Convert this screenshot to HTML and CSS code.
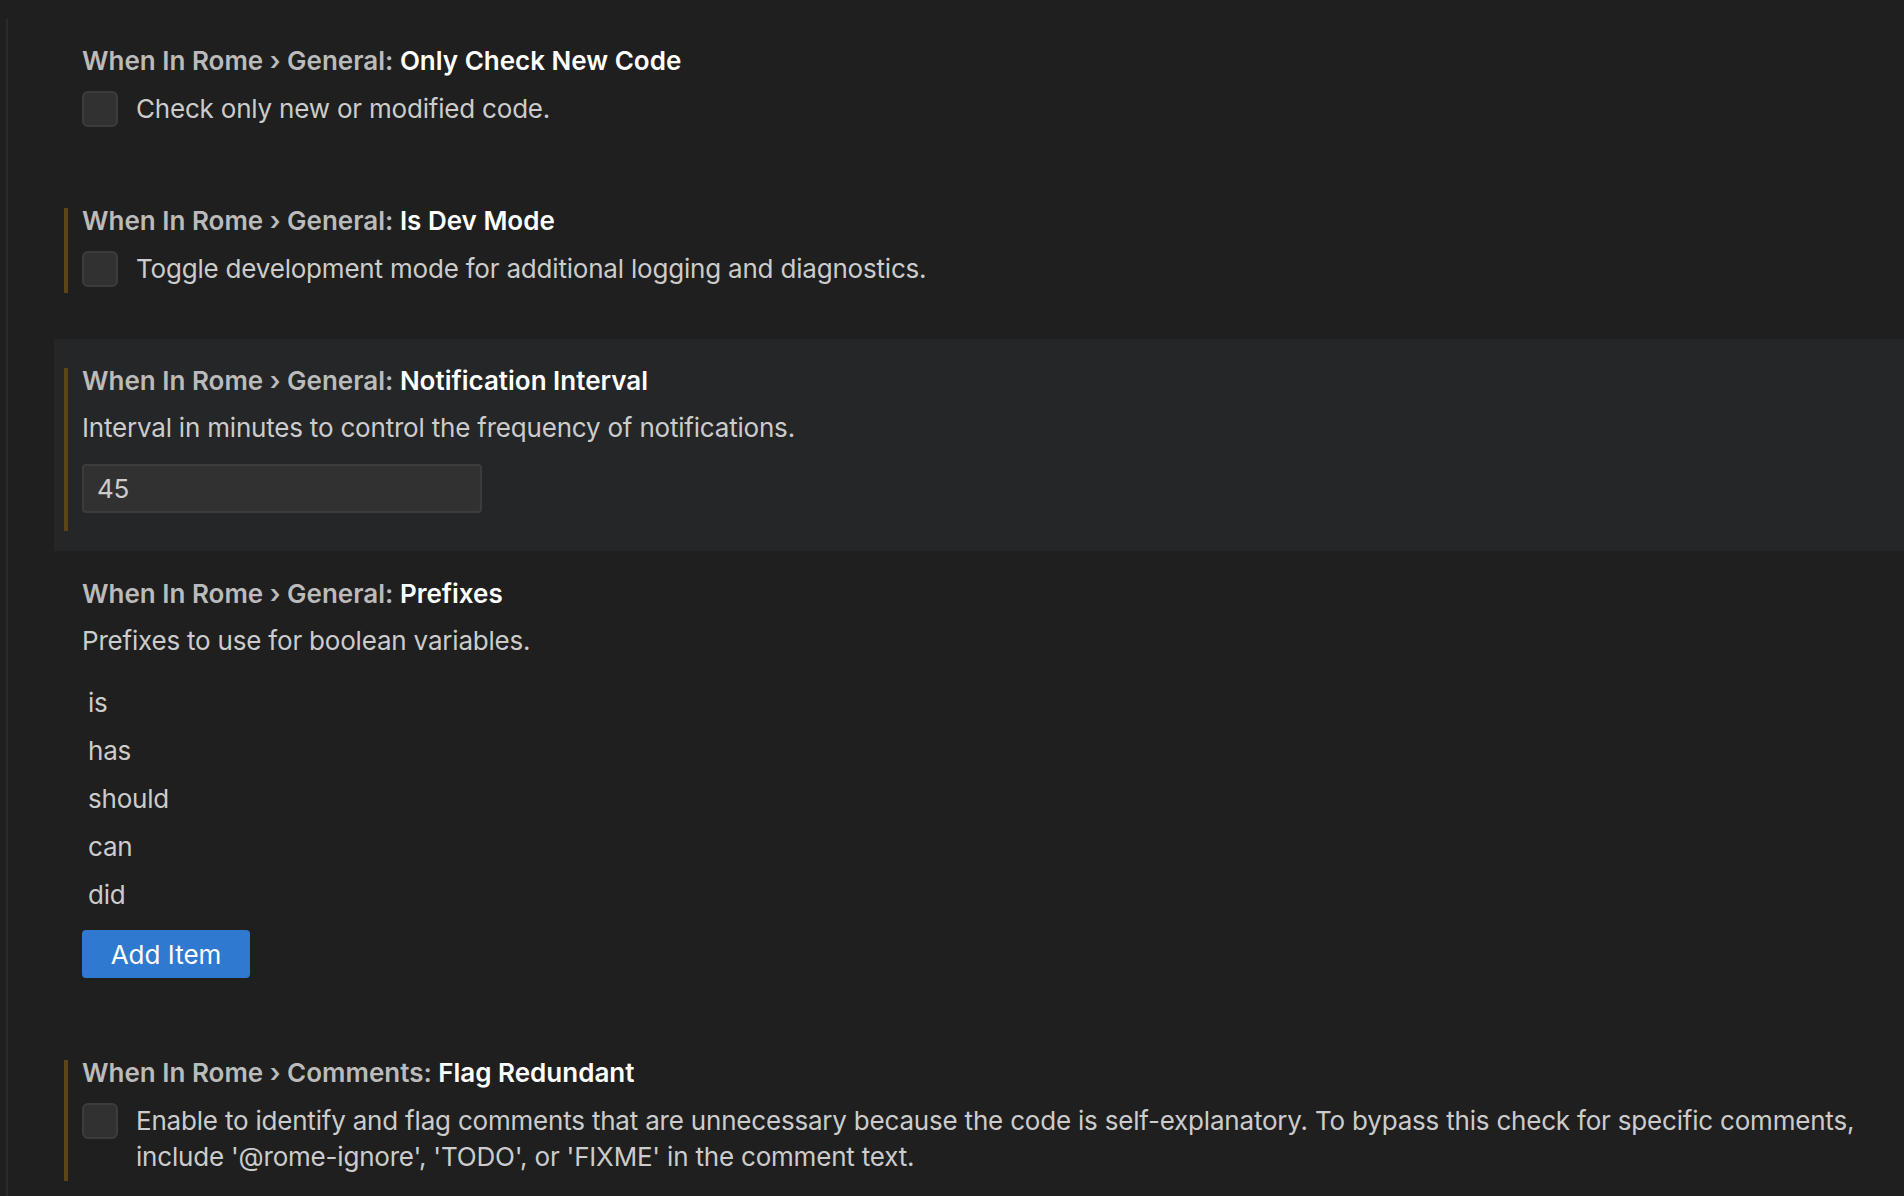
FILE: index.html
```html
<!DOCTYPE html>
<html lang="en">
<head>
<meta charset="utf-8">
<title>Settings</title>
<link rel="stylesheet" href="styles.css">
</head>
<body>
<div class="tree">
  <div class="item item-bool">
    <div class="contents">
      <div class="title"><span class="cat">When In Rome › General: </span><span class="label">Only Check New Code</span></div>
      <div class="bool-row"><span class="checkbox"></span><div class="desc">Check only new or modified code.</div></div>
    </div>
  </div>

  <div class="item item-bool">
    <div class="contents">
      <span class="modified"></span>
      <div class="title"><span class="cat">When In Rome › General: </span><span class="label">Is Dev Mode</span></div>
      <div class="bool-row"><span class="checkbox"></span><div class="desc">Toggle development mode for additional logging and diagnostics.</div></div>
    </div>
  </div>

  <div class="item item-number focused">
    <div class="contents">
      <span class="modified modified-input"></span>
      <div class="title"><span class="cat">When In Rome › General: </span><span class="label">Notification Interval</span></div>
      <div class="desc desc-block">Interval in minutes to control the frequency of notifications.</div>
      <div class="input">45</div>
    </div>
  </div>

  <div class="item item-array">
    <div class="contents">
      <div class="title"><span class="cat">When In Rome › General: </span><span class="label">Prefixes</span></div>
      <div class="desc desc-block">Prefixes to use for boolean variables.</div>
      <ul class="list">
        <li>is</li>
        <li>has</li>
        <li>should</li>
        <li>can</li>
        <li>did</li>
      </ul>
      <button class="add-btn" type="button">Add Item</button>
    </div>
  </div>

  <div class="item item-bool">
    <div class="contents">
      <span class="modified"></span>
      <div class="title"><span class="cat">When In Rome › Comments: </span><span class="label">Flag Redundant</span></div>
      <div class="bool-row"><span class="checkbox"></span><div class="desc">Enable to identify and flag comments that are unnecessary because the code is self-explanatory. To bypass this check for specific comments, include '@rome-ignore', 'TODO', or 'FIXME' in the comment text.</div></div>
    </div>
  </div>
</div>
</body>
</html>
```

FILE: styles.css
```css
html, body {
  margin: 0;
  padding: 0;
  background: #1f1f1f;
  height: 100%;
  overflow: hidden;
}

body {
  font-family: Inter, "Noto Sans", sans-serif;
  font-size: 26px;
  color: #cccccc;
}

.tree {
  margin-left: 6px;
  margin-top: 19px;
  border-left: 2px solid #2b2b2b;
  min-height: 1177px;
  padding-left: 46px;
}

.item {
  padding: 24px 22px 52px 28px;
}

.item.focused {
  background: #242627;
}

.item-number {
  padding-bottom: 38px;
}

.item-array {
  padding-top: 25px;
  padding-bottom: 53px;
}

.contents {
  position: relative;
}

.modified {
  position: absolute;
  left: -18px;
  top: 5px;
  bottom: -6px;
  width: 4px;
  background: #5d4616;
}

.modified-input {
  bottom: -18px;
}

.title {
  line-height: 36px;
  font-weight: 600;
  white-space: nowrap;
}

.cat {
  color: #bbbbbb;
}

.label {
  color: #ffffff;
}

.desc {
  line-height: 36px;
  color: #cccccc;
  letter-spacing: -0.2px;
}

.desc-block {
  margin-top: 11px;
}

.bool-row {
  display: flex;
  align-items: flex-start;
  gap: 18px;
  margin-top: 12px;
}

.checkbox {
  flex: none;
  width: 36px;
  height: 36px;
  box-sizing: border-box;
  background: #313131;
  border: 2px solid #3c3c3c;
  border-radius: 6px;
}

.input {
  margin-top: 18px;
  width: 400px;
  height: 49px;
  box-sizing: border-box;
  background: #313131;
  border: 2px solid #3c3c3c;
  border-radius: 4px;
  padding-left: 13px;
  line-height: 45px;
  color: #cccccc;
  letter-spacing: -0.2px;
}

.list {
  list-style: none;
  margin: 20px 0 0 0;
  padding: 0;
}

.list li {
  line-height: 48px;
  padding-left: 6px;
  color: #cccccc;
  letter-spacing: -0.2px;
}

.add-btn {
  display: block;
  margin-top: 11px;
  width: 168px;
  height: 48px;
  border: none;
  border-radius: 4px;
  background: #2f79d0;
  color: #ffffff;
  font-family: inherit;
  font-size: 26px;
  padding: 0;
}
```
